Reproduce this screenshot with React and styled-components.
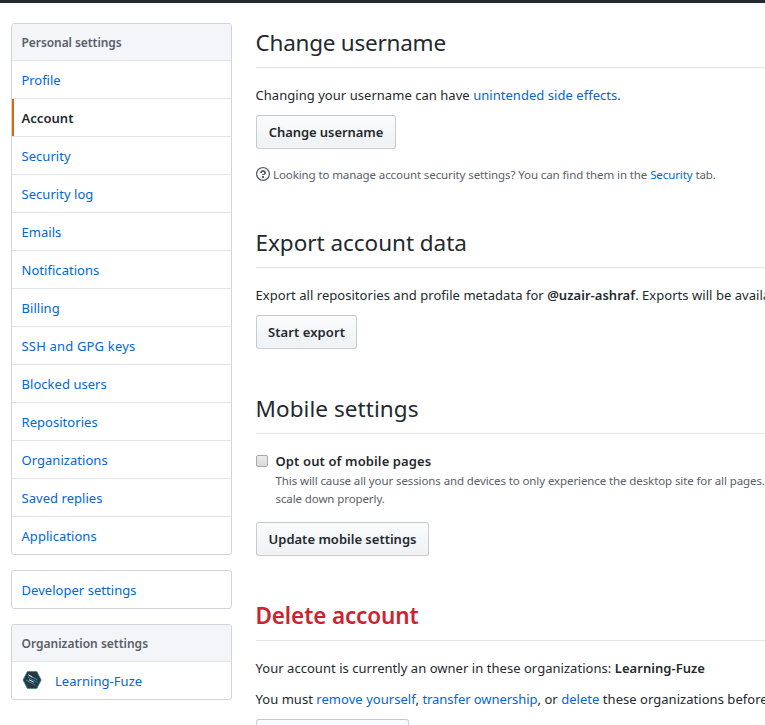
import React from 'react';
import styled, { createGlobalStyle } from 'styled-components';

const GlobalStyle = createGlobalStyle`
  * { box-sizing: border-box; }
  html, body { margin: 0; overflow: hidden; background: #fff; }
  body {
    font: 400 13px/21px "Noto Sans", "Open Sans", sans-serif;
    color: #24292e;
  }
`;

const TopBar = styled.header`
  height: 3px;
  background: #24292e;
`;

const Page = styled.div`
  display: flex;
  align-items: flex-start;
  gap: 24px;
  width: 100%;
  height: 722px;
  overflow: hidden;
  padding: 20px 0 0 11px;
`;

const Sidebar = styled.aside`
  display: flex;
  flex-direction: column;
  gap: 15px;
  flex: 0 0 221px;
`;

const Menu = styled.nav`
  border: 1px solid #d1d5da;
  border-radius: 3px;
  overflow: hidden;
  background: #fff;
`;

const MenuHeading = styled.h3`
  margin: 0;
  height: 37px;
  padding: 1px 9.5px 0;
  border-bottom: 1px solid #e1e4e8;
  background: #f3f5f8;
  color: #586069;
  font-size: 12px;
  font-weight: 600;
  line-height: 36px;
  letter-spacing: ${(p) => p.$tracking || 0}px;
`;

const MenuItem = styled.a`
  display: flex;
  align-items: center;
  height: 38px;
  padding: 1px 9.5px 0;
  border-bottom: 1px solid #e1e4e8;
  color: ${(p) => (p.$selected ? '#24292e' : '#0366d6')};
  font-weight: ${(p) => (p.$selected ? 600 : 400)};
  box-shadow: ${(p) => (p.$selected ? 'inset 2px 0 0 #e36209' : 'none')};
  letter-spacing: ${(p) => p.$tracking ?? 0.04}px;
  text-decoration: none;
  white-space: nowrap;

  &:last-child {
    height: 37px;
    border-bottom: 0;
  }
`;

const Avatar = styled.svg`
  flex: none;
  width: 20px;
  height: 20px;
  margin: -2px 13px 0 0.5px;
`;

const Content = styled.main`
  flex: 1;
  min-width: 0;
  white-space: nowrap;
`;

const Section = styled.section`
  height: ${(p) => p.$height}px;
`;

const Title = styled.h2`
  margin: 0 0 17px;
  height: 45px;
  padding-top: 2px;
  border-bottom: 1px solid #e1e4e8;
  font-size: 22.5px;
  font-weight: ${(p) => (p.$danger ? 600 : 400)};
  line-height: 36px;
  color: ${(p) => (p.$danger ? '#cb2431' : '#24292e')};
  letter-spacing: ${(p) => p.$tracking}px;
  text-indent: -0.5px;
`;

const Text = styled.p`
  margin: 0 0 ${(p) => p.$gap ?? 9}px;
  letter-spacing: 0.04px;
  text-indent: -0.5px;
`;

const Link = styled.a`
  color: #0366d6;
  text-decoration: none;
  letter-spacing: ${(p) => p.$tracking ?? 'inherit'};
`;

const Strong = styled.strong`
  font-weight: 600;
`;

const Button = styled.button`
  display: block;
  width: ${(p) => p.$width}px;
  height: 34px;
  margin: 0;
  padding: 0;
  border: 1px solid rgba(27, 31, 35, 0.2);
  border-radius: 3px;
  background: #eff3f6 linear-gradient(-180deg, #fafbfc 0%, #eff3f6 90%);
  color: #24292e;
  font: inherit;
  font-weight: 600;
  letter-spacing: ${(p) => p.$tracking || 0}px;
`;

const Note = styled.p`
  display: flex;
  align-items: center;
  margin: 0;
  color: #586069;
  font-size: 11.5px;
  line-height: 18px;
  letter-spacing: -0.1px;
`;

const HelpNote = styled(Note)`
  gap: 3px;
  margin-top: 17px;
`;

const HelpIcon = styled.svg`
  flex: none;
  width: 14px;
  height: 16px;
  margin-top: -2px;
  fill: currentColor;
`;

const OptOut = styled.label`
  display: grid;
  grid-template-columns: 12px auto;
  column-gap: 7.5px;
  margin-bottom: 14px;
`;

const CheckBox = styled.input`
  appearance: none;
  width: 12px;
  height: 12px;
  margin: 4px 0 0;
  border: 1px solid #a9a9a9;
  border-radius: 2px;
  background: linear-gradient(#ececec, #d9d9d9);
`;

const OptLabel = styled.strong`
  font-weight: 600;
  letter-spacing: 0.12px;
`;

const personal = [
  ['Profile', -0.05],
  ['Account', 0.04],
  ['Security'],
  ['Security log'],
  ['Emails'],
  ['Notifications'],
  ['Billing'],
  ['SSH and GPG keys', 0.18],
  ['Blocked users'],
  ['Repositories'],
  ['Organizations'],
  ['Saved replies'],
  ['Applications'],
];

export default function App() {
  return (
    <>
      <GlobalStyle />
      <TopBar />
      <Page>
        <Sidebar>
          <Menu>
            <MenuHeading $tracking={-0.07}>Personal settings</MenuHeading>
            {personal.map(([label, tracking]) => (
              <MenuItem key={label} $tracking={tracking} $selected={label === 'Account'}>
                {label}
              </MenuItem>
            ))}
          </Menu>
          <Menu>
            <MenuItem>Developer settings</MenuItem>
          </Menu>
          <Menu>
            <MenuHeading>Organization settings</MenuHeading>
            <MenuItem>
              <Avatar viewBox="0 0 20 20">
                <path d="M5.4 1.5h9.4l4.4 8.500-4.400 8.500H5.400L1 10z" fill="#2b3640" stroke="#2d8f8c" strokeWidth=".8" />
                <g fill="none" strokeWidth=".95">
                  <path d="M6.200 4.800l4.300 2.300" stroke="#fff" />
                  <path d="M10.500 7.100l4.800 2.700" stroke="#35a89f" />
                  <path d="M6 7.200l9.500 5.300" stroke="#2b8fc4" />
                  <path d="M7 9.700l4.700 2.500" stroke="#e8f4f6" />
                  <path d="M4 10l5 2.800" stroke="#35a89f" />
                  <path d="M9 12.800l4.500 2.500" stroke="#2b8fc4" />
                </g>
              </Avatar>
              Learning-Fuze
            </MenuItem>
          </Menu>
        </Sidebar>

        <Content>
          <Section $height={200}>
            <Title $tracking={-0.24}>Change username</Title>
            <Text>
              Changing your username can have <Link>unintended side effects</Link>.
            </Text>
            <Button $width={140} $tracking={-0.07}>Change username</Button>
            <HelpNote>
              <HelpIcon viewBox="0 0 14 16">
                <path
                  fillRule="evenodd"
                  d="M6 10h2v2H6v-2zm4-3.5C10 8.64 8 9 8 9H6c0-.55.45-1 1-1h.5c.28 0 .5-.22.5-.5v-1c0-.28-.22-.5-.5-.5h-1c-.28 0-.5.22-.5.5V7H4c0-1.5 1.5-3 3-3s3 1 3 2.500zM7 2.300c3.140 0 5.700 2.560 5.700 5.700s-2.560 5.700-5.700 5.700A5.710 5.710 0 0 1 1.300 8c0-3.140 2.560-5.700 5.700-5.700zM7 1C3.140 1 0 4.140 0 8s3.140 7 7 7 7-3.140 7-7-3.140-7-7-7z"
                />
              </HelpIcon>
              <span>
                Looking to manage account security settings? You can find them in the{' '}
                <Link>Security</Link> tab.
              </span>
            </HelpNote>
          </Section>

          <Section $height={166}>
            <Title $tracking={-0.03}>Export account data</Title>
            <Text>
              Export all repositories and profile metadata for <Strong>@uzair-ashraf</Strong>. Exports will be
              available
            </Text>
            <Button $width={101} $tracking={0.08}>Start export</Button>
          </Section>

          <Section $height={207}>
            <Title $tracking={0.07}>Mobile settings</Title>
            <OptOut>
              <CheckBox type="checkbox" />
              <div>
                <OptLabel>Opt out of mobile pages</OptLabel>
                <Note>
                  This will cause all your sessions and devices to only experience the desktop site for all pages.
                  <br />
                  scale down properly.
                </Note>
              </div>
            </OptOut>
            <Button $width={173}>Update mobile settings</Button>
          </Section>

          <Section $height={170}>
            <Title $danger $tracking={-0.13}>Delete account</Title>
            <Text $gap={10}>
              Your account is currently an owner in these organizations: <Strong>Learning-Fuze</Strong>
            </Text>
            <Text>
              You must <Link>remove yourself</Link>, <Link $tracking="-0.06px">transfer ownership</Link>, or{' '}
              <Link>delete</Link> these organizations before
            </Text>
            <Button $width={153} aria-label="Delete your account" />
          </Section>
        </Content>
      </Page>
    </>
  );
}
